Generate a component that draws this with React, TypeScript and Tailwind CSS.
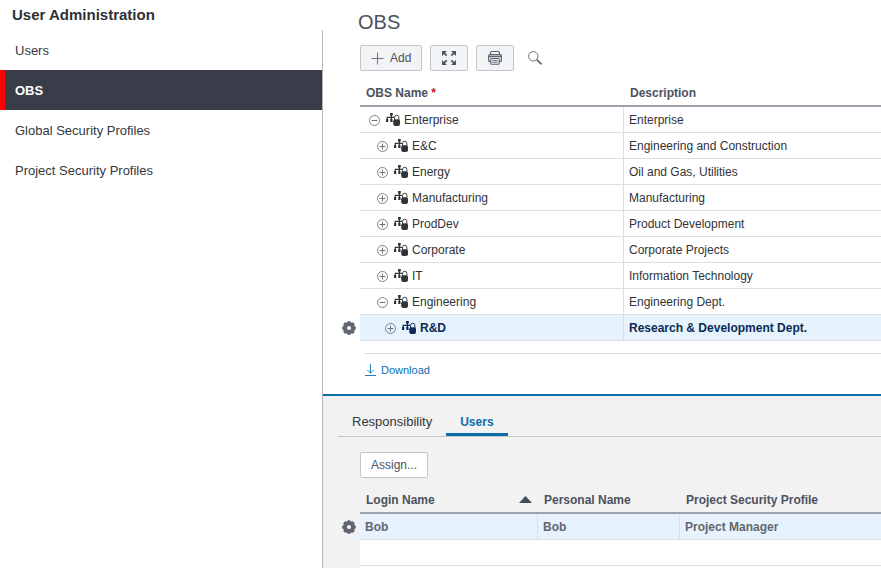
import React, { useState } from "react";
import clsx from "clsx";

type ObsRow = {
  name: string;
  description: string;
  level: number;
  open?: boolean;
};

const navItems = ["Users", "OBS", "Global Security Profiles", "Project Security Profiles"];

const obsRows: ObsRow[] = [
  { name: "Enterprise", description: "Enterprise", level: 0, open: true },
  { name: "E&C", description: "Engineering and Construction", level: 1 },
  { name: "Energy", description: "Oil and Gas, Utilities", level: 1 },
  { name: "Manufacturing", description: "Manufacturing", level: 1 },
  { name: "ProdDev", description: "Product Development", level: 1 },
  { name: "Corporate", description: "Corporate Projects", level: 1 },
  { name: "IT", description: "Information Technology", level: 1 },
  { name: "Engineering", description: "Engineering Dept.", level: 1, open: true },
  { name: "R&D", description: "Research & Development Dept.", level: 2 },
];

const indents = ["pl-[9px]", "pl-[17px]", "pl-[25px]"];

const GearIcon = () => (
  <svg width="14" height="14" viewBox="0 0 14 14" fill="#606671">
    {[0, 45, 90, 135].map((angle) => (
      <rect key={angle} x="4.9" y="0.2" width="4.2" height="13.6" rx="1.5" transform={`rotate(${angle} 7 7)`} />
    ))}
    <circle cx="7" cy="7" r="5.4" />
    <circle cx="7" cy="7" r="2.1" fill="#f7f8f9" />
  </svg>
);

const ToggleIcon = ({ open }: { open?: boolean }) => (
  <svg width="12" height="12" viewBox="0 0 12 12" fill="none" stroke="#70757e">
    <circle cx="5.5" cy="6.5" r="5" strokeWidth="0.9" />
    <path d={open ? "M2.5 6.5h6" : "M2.5 6.5h6M5.5 3.5v6"} />
  </svg>
);

// org chart with a padlock on its lower right corner
const ObsIcon = () => (
  <svg width="14" height="14" viewBox="0 0 14 14" fill="none" stroke="currentColor">
    <path d="M4 0h2.8v2.6H4zM0 6h2.2v3H0zM4.3 6h2.2v3H4.3z" fill="currentColor" stroke="none" />
    <path d="M5.4 2v5" strokeWidth="1.2" />
    <path d="M1.2 7V4.4h7" strokeWidth="1.1" />
    <path d="M8.5 7.5V4.4a2.2 2.2 0 0 1 4.4 0v3" strokeWidth="0.9" />
    <rect x="7.2" y="6.2" width="6.8" height="6.8" rx="2" fill="currentColor" stroke="none" />
  </svg>
);

const PlusIcon = () => (
  <svg width="13" height="13" viewBox="0 0 13 13" stroke="#70757e">
    <path d="M6.5 0.5v12M0.5 6.5h12" />
  </svg>
);

const ExpandIcon = () => (
  <svg width="14" height="14" viewBox="0 0 14 14" fill="#4b5260" stroke="#4b5260">
    <path d="M0 0h5L0 5zM14 0v5L9 0zM0 14V9l5 5zM14 14H9l5-5z" stroke="none" />
    <path d="M1.5 1.5l3.2 3.2M12.5 1.5L9.3 4.7M1.5 12.5l3.2-3.2M12.5 12.5L9.3 9.3" strokeWidth="1.7" />
  </svg>
);

const PrintIcon = () => (
  <svg width="14" height="14" viewBox="0 0 14 14" fill="none" stroke="#5d6470">
    <path d="M2.5 3.5V2a1.5 1.5 0 0 1 1.5-1.5h6A1.5 1.5 0 0 1 11.5 2v1.5" strokeWidth="1.1" />
    <rect x="0.6" y="3.6" width="12.8" height="7" rx="1.4" strokeWidth="1.2" />
    <path d="M1 5.5h12" strokeWidth="1.4" />
    <rect x="2.8" y="7.5" width="8.4" height="5.8" rx="0.8" fill="#f2f3f4" strokeWidth="1.1" />
    <path d="M4.3 9.5h5.4M4.3 11.3h5.4" strokeWidth="0.9" />
  </svg>
);

const SearchIcon = () => (
  <svg width="14" height="14" viewBox="0 0 14 14" fill="none" stroke="#5d6470">
    <circle cx="5.3" cy="5.3" r="4.7" strokeWidth="0.9" />
    <path d="M8.7 8.7l4.9 4.6" strokeWidth="1.6" />
  </svg>
);

const DownloadIcon = () => (
  <svg width="12" height="12" viewBox="0 0 12 12" fill="none" stroke="currentColor">
    <path d="M6.5 0v9M3.2 5.8l3.3 3.3 3.3-3.3M1 11.5h11" strokeWidth="0.9" />
  </svg>
);

const Sidebar = () => {
  const [active, setActive] = useState("OBS");

  return (
    <aside className="flex w-[323px] shrink-0 flex-col">
      <h2 className="h-[30px] pl-3 text-[15px] leading-[30px] font-bold text-[#2f3136]">User Administration</h2>
      <nav className="flex-1 border-r border-[#b4b6ba]">
        <ul>
          {navItems.map((item) => (
            <li key={item}>
              <a
                href="#"
                onClick={() => setActive(item)}
                className={clsx(
                  "block h-10 border-l-[5px] pl-[10px] text-[13px] leading-[42px]",
                  item === active
                    ? "border-[#ff0000] bg-[#383d49] font-bold text-white"
                    : "border-transparent text-[#34373d]"
                )}
              >
                {item}
              </a>
            </li>
          ))}
        </ul>
      </nav>
    </aside>
  );
};

const toolButton =
  "flex h-[26px] items-center justify-center rounded-[2px] border border-[#c3c7cd] bg-[#f2f3f4] text-[#4b5260]";
const headCell = "h-[27px] border-b-2 border-[#9da1a9] pl-[6px] text-left font-bold text-[#4b5260]";
const bodyCell = "h-[26px] border-b border-[#dcdee1] pl-[5px]";

const ObsTable = () => (
  <table className="w-full table-fixed border-separate border-spacing-0 text-xs leading-4">
    <colgroup>
      <col className="w-[37px]" />
      <col className="w-[264px]" />
      <col />
    </colgroup>
    <thead>
      <tr>
        <td />
        <th className={headCell}>
          OBS Name <span className="text-[#c8102e]">*</span>
        </th>
        <th className={headCell}>Description</th>
      </tr>
    </thead>
    <tbody>
      {obsRows.map((row) => {
        const selected = row.name === "R&D";
        return (
          <tr key={row.name} className={selected ? "font-bold text-[#0c2a55]" : "text-[#303338]"}>
            <td className="pl-[19px]">
              {selected && (
                <button type="button" aria-label="Row settings" className="block">
                  <GearIcon />
                </button>
              )}
            </td>
            <td className={clsx("h-[26px] border-r border-b border-[#dcdee1]", selected && "bg-[#e6f2fc]")}>
              <div className={clsx("flex items-center", indents[row.level])}>
                <button type="button" aria-label={row.open ? "Collapse" : "Expand"} className="mr-[5px]">
                  <ToggleIcon open={row.open} />
                </button>
                <ObsIcon />
                <span className="ml-1">{row.name}</span>
              </div>
            </td>
            <td className={clsx(bodyCell, selected && "bg-[#e6f2fc]")}>{row.description}</td>
          </tr>
        );
      })}
    </tbody>
  </table>
);

const UsersTable = () => (
  <table className="w-full table-fixed border-separate border-spacing-0 text-xs leading-4">
    <colgroup>
      <col className="w-[37px]" />
      <col className="w-[178px]" />
      <col className="w-[142px]" />
      <col />
    </colgroup>
    <thead>
      <tr>
        <td />
        <th className={headCell}>
          <div className="flex items-center justify-between pr-[6px]">
            Login Name
            <svg width="13" height="7" viewBox="0 0 13 7" fill="#454c5a">
              <path d="M6.5 0L13 7H0z" />
            </svg>
          </div>
        </th>
        <th className={headCell}>Personal Name</th>
        <th className={headCell}>Project Security Profile</th>
      </tr>
    </thead>
    <tbody>
      <tr className="font-bold text-[#63676e]">
        <td className="pl-[19px]">
          <button type="button" aria-label="Row settings" className="block">
            <GearIcon />
          </button>
        </td>
        <td className={clsx(bodyCell, "border-r bg-[#e6f2fc]")}>Bob</td>
        <td className={clsx(bodyCell, "border-r bg-[#e6f2fc]")}>Bob</td>
        <td className={clsx(bodyCell, "bg-[#e6f2fc]")}>Project Manager</td>
      </tr>
      {[1, 2].map((n) => (
        <tr key={n}>
          <td />
          <td colSpan={3} className={clsx(bodyCell, "bg-white")} />
        </tr>
      ))}
    </tbody>
  </table>
);

const tabs = ["Responsibility", "Users"];

const DetailPane = () => {
  const [tab, setTab] = useState("Users");

  return (
    <section className="flex-1 overflow-hidden border-t-2 border-[#0b6eab] bg-[#f2f2f2]">
      <div className="ml-[15px] flex border-b border-[#c6c8cb]">
        {tabs.map((name) => (
          <button
            key={name}
            type="button"
            onClick={() => setTab(name)}
            className={clsx(
              "flex h-10 items-end border-b-[3px] px-[14px] pb-[3px] leading-4",
              name === tab
                ? "border-[#0b6eab] text-xs font-bold text-[#0b6eab]"
                : "border-transparent text-[13px] text-[#34373d]"
            )}
          >
            {name}
          </button>
        ))}
      </div>
      <div className="pt-[15px] pb-[9px] pl-[37px]">
        <button
          type="button"
          className="h-[26px] rounded-[2px] border border-[#c3c7cd] bg-white px-[10px] text-xs text-[#4b5260]"
        >
          Assign...
        </button>
      </div>
      <UsersTable />
    </section>
  );
};

const App = () => {
  return (
    <div className="flex h-screen overflow-hidden bg-white font-['Liberation_Sans',Arial,sans-serif]">
      <Sidebar />
      <main className="flex min-w-0 flex-1 flex-col">
        <section className="shrink-0 pt-2">
          <h1 className="pl-[35px] text-xl text-[#4b5260]">OBS</h1>
          <div className="flex gap-2 py-[9px] pl-[37px]">
            <button type="button" className={clsx(toolButton, "gap-[6px] px-[10px] text-xs")}>
              <PlusIcon />
              Add
            </button>
            <button type="button" aria-label="Expand" className={clsx(toolButton, "w-[38px]")}>
              <ExpandIcon />
            </button>
            <button type="button" aria-label="Print" className={clsx(toolButton, "w-[38px]")}>
              <PrintIcon />
            </button>
            <button type="button" aria-label="Search" className="flex w-[26px] items-center justify-center">
              <SearchIcon />
            </button>
          </div>
          <ObsTable />
          <div className="mt-3 ml-[41px] border-t border-[#dcdee1] pt-2 pb-4">
            <a href="#" className="flex items-center gap-[5px] text-[11px] leading-4 text-[#0b6eab]">
              <DownloadIcon />
              Download
            </a>
          </div>
        </section>
        <DetailPane />
      </main>
    </div>
  );
};

export default App;
